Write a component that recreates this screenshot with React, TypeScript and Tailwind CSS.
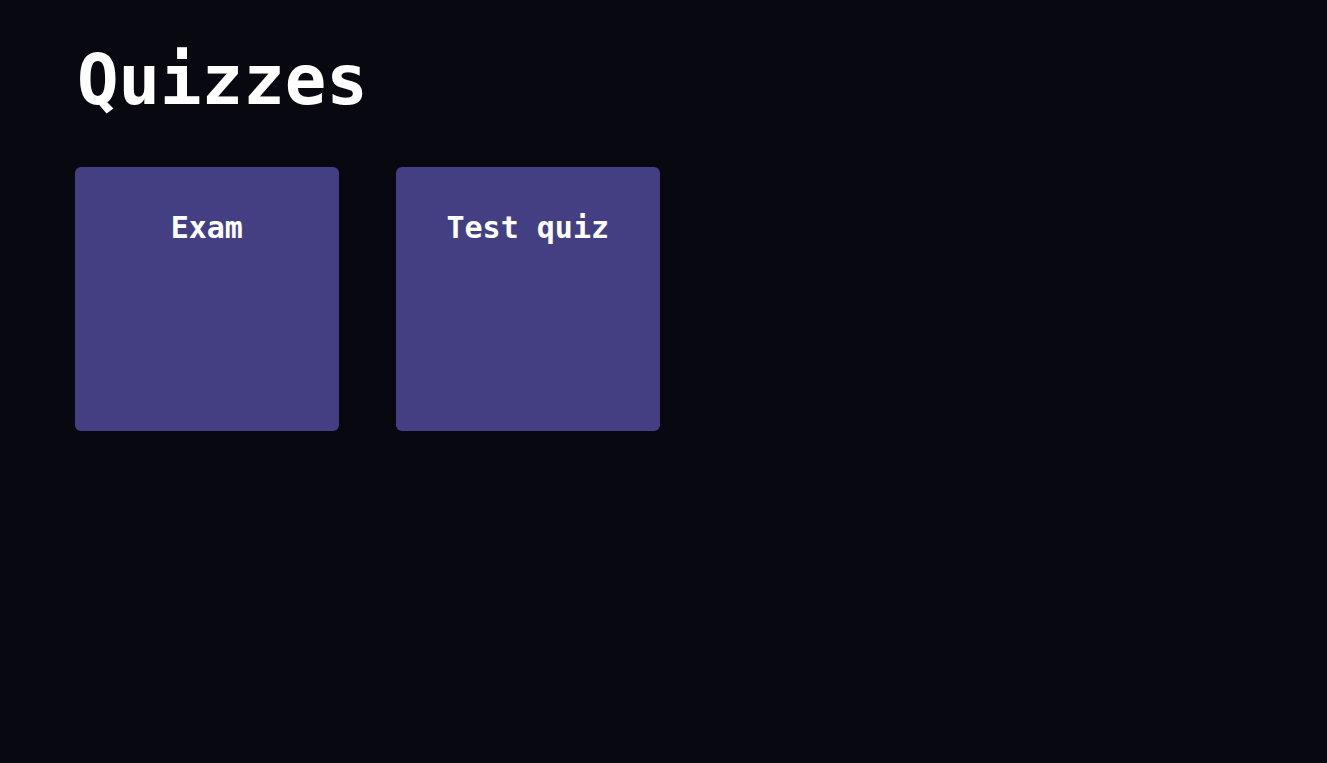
const quizzes = [{ id: 1, title: "Exam" }, { id: 2, title: "Test quiz" }];

export default function App() {
  return (
    <div className="min-h-screen bg-[#080811] text-white font-['DejaVu_Sans_Mono',monospace] px-[75px] pt-[46px]">
      <h1 className="text-[69px] font-bold leading-none pl-[2px]">Quizzes</h1>
      <div className="mt-[52px] flex gap-[57.5px]">
        {quizzes.map((q) => (
          <div
            key={q.id}
            className="w-[263.5px] h-[264px] rounded-md bg-[#433f82] flex justify-center pt-[43px]"
          >
            <h2 className="text-3xl font-bold h-9">{q.title}</h2>
          </div>
        ))}
      </div>
    </div>
  );
}
